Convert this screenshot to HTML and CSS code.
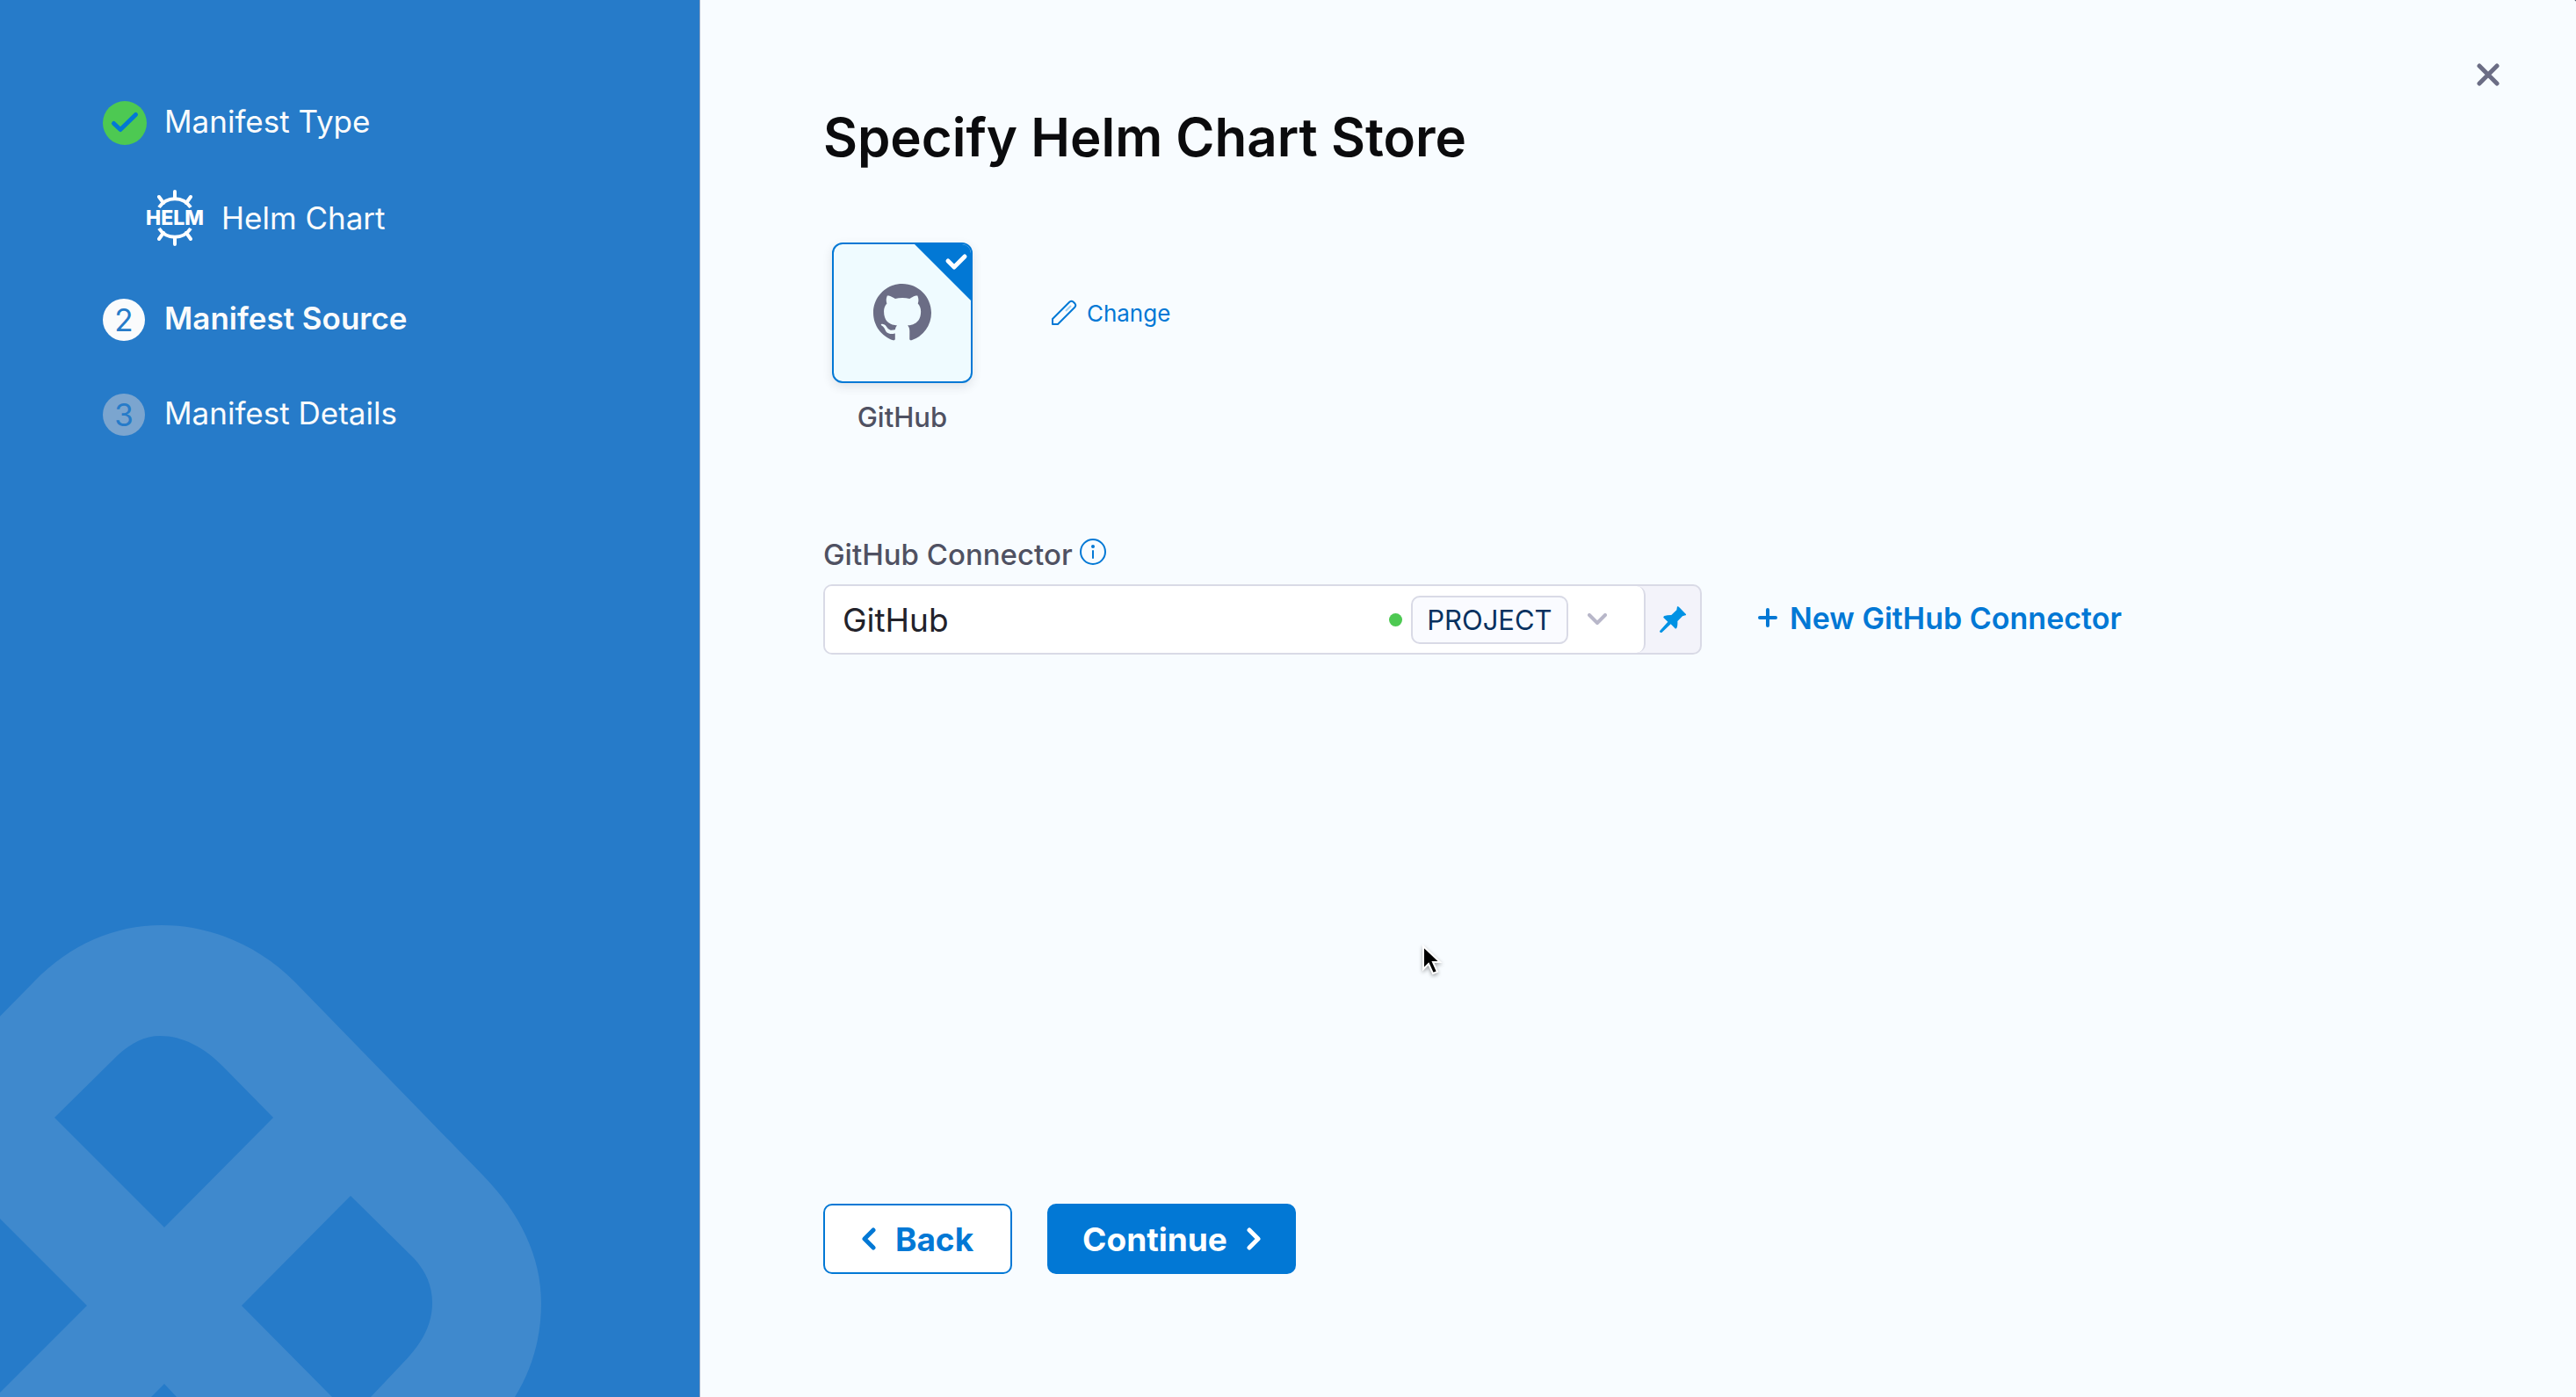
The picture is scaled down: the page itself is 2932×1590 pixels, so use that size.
FILE: index.html
```html
<!DOCTYPE html>
<html lang="en">
<head>
  <meta charset="utf-8">
  <meta name="viewport" content="width=device-width, initial-scale=1">
  <title>Specify Helm Chart Store</title>
  <link rel="stylesheet" href="styles.css">
</head>
<body>
  <div class="wizard">
    <aside class="sidebar">
      <svg class="watermark" viewBox="0 0 640 540" aria-hidden="true">
        <path fill-rule="evenodd" d="M-10 117 L39 67 C80 25 130 3 184 3 C240 3 294 26 336 68 L550 288 C592 331 616 380 616 433 C616 470 607 506 586 540 H-10 Z M62 222 L134 151 C149 137 165 129 182 129 C208 129 232 142 253 163 L311 222 L187 347 Z M399 311 L471 382 C485 397 492 414 492 433 C492 459 479 481 457 503 L422 540 H378 L275 436 Z M-10 327 L99 436 L-10 545 Z M187 525 L201 540 H172 Z"/>
      </svg>
      <ol class="steps">
        <li class="step">
          <svg class="step-done" viewBox="0 0 50 50" aria-hidden="true">
            <circle cx="25" cy="25" r="25" fill="#4dc952"/>
            <path d="M12.500 25.500 L20 32.500 L37.500 15.500" fill="none" stroke="#0278d5" stroke-width="5" stroke-linecap="round" stroke-linejoin="round"/>
          </svg>
          <span class="step-text">Manifest Type</span>
        </li>
        <li class="substep">
          <svg class="helm" viewBox="0 0 66 66" aria-hidden="true">
            <g fill="none" stroke="#fff" stroke-width="4" stroke-linecap="round">
              <path stroke-linecap="butt" d="M15 21 A21.500 21.500 0 0 1 51 21 M15 45 A21.500 21.500 0 0 0 51 45"/>
              <path d="M33 3 V11 M33 55 V63 M15 9 L20 16 M51 9 L46 16 M15 57 L20 50 M51 57 L46 50"/>
            </g>
            <text x="33" y="41" text-anchor="middle" fill="#fff" font-size="23" font-weight="800">HELM</text>
          </svg>
          <span>Helm Chart</span>
        </li>
        <li class="step step-current" aria-current="step">
          <span class="step-number">2</span>
          <span class="step-text">Manifest Source</span>
        </li>
        <li class="step step-next">
          <span class="step-number">3</span>
          <span class="step-text">Manifest Details</span>
        </li>
      </ol>
    </aside>

    <main class="content">
      <header class="header">
        <h1>Specify Helm Chart Store</h1>
        <button class="close" type="button" aria-label="Close">
          <svg viewBox="0 0 26 26" aria-hidden="true"><path d="M3 3 L23 23 M23 3 L3 23" fill="none" stroke="#6b6d85" stroke-width="5" stroke-linecap="round"/></svg>
        </button>
      </header>

      <section class="store">
        <figure class="store-option">
          <div class="card">
            <svg class="github" viewBox="0 0 16 16" aria-hidden="true"><path fill="#6b6d85" d="M8 0C3.580 0 0 3.580 0 8c0 3.540 2.290 6.530 5.470 7.590.4.070.55-.17.55-.38 0-.19-.01-.82-.01-1.490-2.010.37-2.530-.49-2.690-.94-.09-.23-.48-.94-.82-1.130-.28-.15-.68-.52-.01-.53.63-.01 1.080.58 1.230.82.720 1.210 1.870.87 2.330.66.070-.52.280-.87.510-1.070-1.780-.2-3.640-.89-3.640-3.950 0-.87.310-1.590.82-2.150-.08-.2-.36-1.020.08-2.120 0 0 .67-.21 2.200.82.640-.18 1.320-.27 2-.27s1.360.09 2 .27c1.530-1.040 2.200-.82 2.200-.82.440 1.100.160 1.920.080 2.120.510.560.820 1.270.820 2.150 0 3.070-1.870 3.750-3.650 3.950.290.250.540.730.540 1.480 0 1.070-.01 1.930-.01 2.200 0 .210.150.460.550.380A8.010 8.010 0 0 0 16 8c0-4.420-3.580-8-8-8z"/></svg>
            <svg class="card-check" viewBox="0 0 64 64" aria-hidden="true">
              <path d="M0 0 H64 V64 Z" fill="#0278d5"/>
              <path d="M38 19 L45 26 L57 14" fill="none" stroke="#fff" stroke-width="5" stroke-linecap="round" stroke-linejoin="round"/>
            </svg>
          </div>
          <figcaption>GitHub</figcaption>
        </figure>
        <button class="change" type="button">
          <svg viewBox="0 0 30 30" aria-hidden="true"><path d="M2 28 V22 L21.500 2.500 Q23.500 1 25.500 2.500 L27.500 4.500 Q29 6.500 27.500 8.500 L8 28 Z" fill="none" stroke="#0278d5" stroke-width="2" stroke-linejoin="round"/><path d="M17 13 L23 7" stroke="#a3d0f0" stroke-width="2"/></svg>
          Change
        </button>
      </section>

      <section class="connector">
        <div class="label-row">
          <label for="connector">GitHub Connector</label>
          <svg class="info" viewBox="0 0 30 30" aria-hidden="true"><circle cx="15" cy="15" r="14" fill="none" stroke="#0278d5" stroke-width="2"/><circle cx="15" cy="9" r="2" fill="#0278d5"/><path d="M15 14 V22" stroke="#0278d5" stroke-width="2" stroke-linecap="round"/></svg>
        </div>
        <div class="connector-row">
          <div class="field">
            <button class="select" id="connector" type="button" aria-haspopup="listbox">
              <span class="select-value">GitHub</span>
              <span class="status"></span>
              <span class="scope">PROJECT</span>
              <svg class="chevron" viewBox="0 0 22 14" aria-hidden="true"><path d="M2 2 L11 11 L20 2" fill="none" stroke="#b8b7c9" stroke-width="4" stroke-linecap="round" stroke-linejoin="round"/></svg>
            </button>
            <button class="pin" type="button" aria-label="Fixed value">
              <svg viewBox="0 0 90 90" aria-hidden="true"><path fill="#0092e4" d="M60 1 Q64 0 67 4 L89 26 Q92 30 88 31 L78 34 L61 51 Q62 64 59 73 Q56 79 52 75 L38 61 L7 90 Q1 92 0 85 L28 53 L14 40 Q11 36 16 33 Q26 30 40 30 L58 13 Z"/></svg>
            </button>
          </div>
          <button class="new" type="button">
            <svg viewBox="0 0 22 22" aria-hidden="true"><path d="M11 2 V20 M2 11 H20" stroke="#0278d5" stroke-width="4" stroke-linecap="round"/></svg>
            New GitHub Connector
          </button>
        </div>
      </section>

      <footer class="actions">
        <button class="btn btn-back" type="button">
          <svg viewBox="0 0 16 26" aria-hidden="true"><path d="M13 3 L3 13 L13 23" fill="none" stroke="currentColor" stroke-width="5" stroke-linecap="round" stroke-linejoin="round"/></svg>
          Back
        </button>
        <button class="btn btn-continue" type="button">
          Continue
          <svg viewBox="0 0 16 26" aria-hidden="true"><path d="M3 3 L13 13 L3 23" fill="none" stroke="currentColor" stroke-width="5" stroke-linecap="round" stroke-linejoin="round"/></svg>
        </button>
      </footer>
    </main>
  </div>
  <svg class="cursor" viewBox="0 0 24 36" aria-hidden="true"><path d="M2 2 V28 L8 22 L13 33 L18 31 L13 20 H21 Z" fill="#000" stroke="#fff" stroke-width="2"/></svg>
</body>
</html>
```
FILE: styles.css
```css
* {
  box-sizing: border-box;
}

body {
  margin: 0;
  background: #0a1b39;
  color: #22222a;
  font-family: Inter, "Liberation Sans", sans-serif;
  font-optical-sizing: none;
}

h1,
ol,
figure {
  margin: 0;
  padding: 0;
}

svg {
  display: block;
  flex: none;
}

button {
  margin: 0;
  padding: 0;
  border: 0;
  background: none;
  color: #0278d5;
  font: inherit;
  cursor: pointer;
}

.wizard {
  display: grid;
  grid-template-columns: 27.18% 1fr;
  min-height: 100vh;
  overflow: hidden;
  border-top-right-radius: 2px;
  background: #f8fcff;
}

/* Step list */
.sidebar {
  position: relative;
  overflow: hidden;
  padding: 115px 40px 40px 117px;
  border-right: 1px solid #8ba0bf;
  background: #267bc9;
  color: #fafbfc;
  font-size: 35px;
  line-height: 44px;
}

.watermark {
  position: absolute;
  bottom: 0;
  left: 0;
  width: 640px;
  height: 540px;
  fill: #3f89cd;
}

.steps {
  position: relative;
  display: flex;
  flex-direction: column;
  list-style: none;
}

.step,
.substep {
  display: flex;
  align-items: center;
}

.step {
  gap: 22px;
}

.step-text {
  padding-bottom: 4px;
}

.step-done {
  width: 50px;
  height: 50px;
  margin-right: -2px;
}

.substep {
  gap: 20px;
  margin: 50px 0 59px 49px;
}

.helm {
  width: 66px;
  height: 66px;
}

.step-number {
  display: grid;
  place-items: center;
  width: 48px;
  height: 48px;
  border-radius: 50%;
  background: #fafbfc;
  color: #267bc9;
}

.step-current {
  margin-bottom: 60px;
}

.step-current .step-text {
  font-weight: 600;
}

.step-next .step-number {
  background: #7ba5cf;
}

/* Panel */
.content {
  display: flex;
  flex-direction: column;
  padding: 72px 87px 140px 140px;
}

.header {
  display: flex;
  align-items: flex-start;
  justify-content: space-between;
  margin-bottom: 84px;
}

h1 {
  padding-top: 48px;
  color: #0b0b0d;
  font-size: 60px;
  font-weight: 600;
  line-height: 72px;
}

.close svg {
  width: 26px;
  height: 26px;
}

.store {
  display: flex;
  align-items: flex-start;
  gap: 89px;
  margin-bottom: 118px;
  padding-left: 10px;
}

.card {
  position: relative;
  display: grid;
  place-items: center;
  width: 160px;
  height: 160px;
  overflow: hidden;
  border: 2px solid #0278d5;
  border-radius: 12px;
  background: #effbff;
}

.store-option {
  text-align: center;
}

.store-option .card {
  box-shadow: 0 4px 12px rgb(40 41 61 / 12%);
}

.github {
  width: 66px;
  height: 66px;
}

.card-check {
  position: absolute;
  top: 0;
  right: 0;
  width: 64px;
  height: 64px;
}

figcaption {
  margin-top: 21px;
  color: #4f5162;
  font-size: 31px;
  font-weight: 500;
  line-height: 36px;
}

.change {
  display: flex;
  align-items: center;
  gap: 11px;
  height: 160px;
  font-size: 26px;
}

.change svg {
  width: 30px;
  height: 30px;
}

.label-row {
  display: flex;
  align-items: center;
  gap: 8px;
  margin-bottom: 14px;
  color: #4f5162;
  font-size: 33px;
  font-weight: 500;
  line-height: 40px;
}

.info {
  width: 30px;
  height: 30px;
  margin-bottom: 6px;
}

.connector-row {
  display: flex;
  align-items: center;
  gap: 64px;
}

.field {
  display: flex;
  flex: 0 1 1000px;
  height: 80px;
  overflow: hidden;
  border: 2px solid #d9dae6;
  border-radius: 10px;
  background: #f3f3fa;
}

.select {
  display: flex;
  flex: 1;
  align-items: center;
  padding: 0 42px 0 20px;
  border-right: 2px solid #d9dae6;
  border-radius: 0 10px 10px 0;
  background: #fff;
  color: #22222a;
  font-size: 37px;
}

.select-value {
  flex: 1;
  text-align: left;
}

.status {
  width: 15px;
  height: 15px;
  margin-right: 10px;
  border-radius: 50%;
  background: #4dc952;
}

.scope {
  display: grid;
  place-items: center;
  width: 179px;
  height: 55px;
  margin-right: 22px;
  border: 2px solid #d9dae6;
  border-radius: 10px;
  background: #fafbff;
  color: #07315f;
  font-size: 31px;
}

.chevron {
  width: 22px;
  height: 14px;
}

.pin {
  display: grid;
  place-items: center;
  width: 62px;
}

.pin svg {
  width: 30px;
  height: 30px;
}

.new {
  display: flex;
  align-items: center;
  gap: 14px;
  padding-bottom: 4px;
  font-size: 34px;
  font-weight: 600;
}

.new svg {
  width: 22px;
  height: 22px;
}

.actions {
  display: flex;
  gap: 40px;
  margin-top: auto;
}

.btn {
  display: flex;
  align-items: center;
  height: 80px;
  padding: 0 42px;
  gap: 22px;
  border: 2px solid #0278d5;
  border-radius: 10px;
  font-size: 37px;
  font-weight: 700;
}

.btn svg {
  width: 16px;
  height: 26px;
}

.btn-back {
  background: #fff;
}

.btn-continue {
  padding: 0 38px;
  background: #0278d5;
  color: #fff;
}

/* Mouse pointer, over the page */
.cursor {
  position: absolute;
  top: 1075px;
  left: 1618px;
  width: 24px;
  height: 36px;
  filter: drop-shadow(0 2px 2px rgb(0 0 0 / 35%));
}
```
